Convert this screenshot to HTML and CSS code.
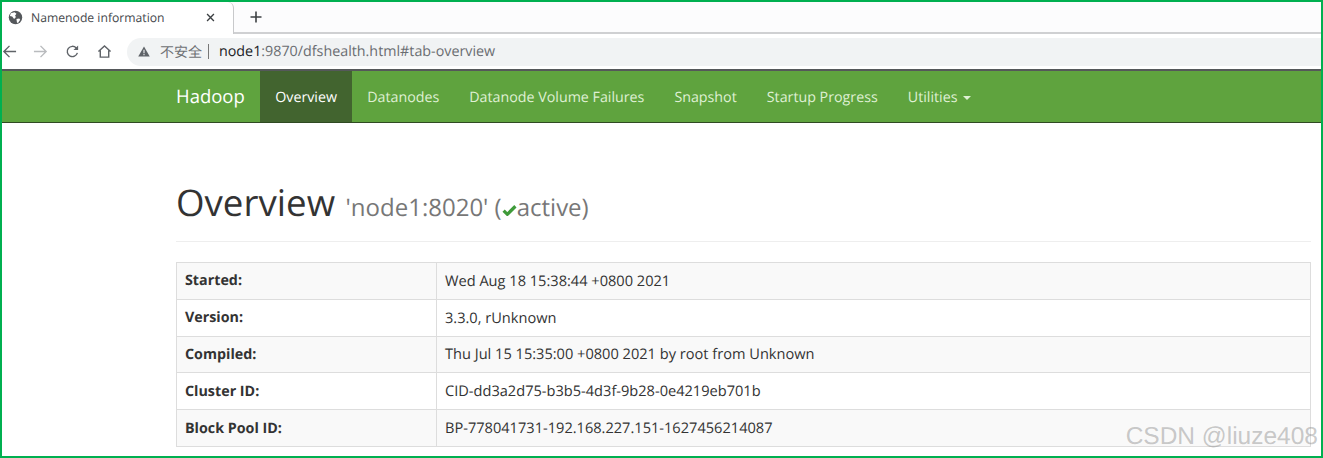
FILE: index.html
```html
<!DOCTYPE html>
<html lang="en">
<head>
<meta charset="utf-8">
<title>Namenode information</title>
<link rel="stylesheet" href="styles.css">
</head>
<body>
<div class="frame">
  <div class="tabstrip">
    <div class="tab">
      <svg class="favicon" viewBox="0 0 16 16"><circle cx="8" cy="8" r="7.2" fill="#55585c"/><path d="M3 3.5 7 2.5 9 4 7.5 6 8.5 7.5 6.5 9.5 4.5 7 2 6.5ZM9 9.5 12 9 13 10.5 10.5 14 9.5 13Z" fill="#fff"/></svg>
      <span class="tab-title">Namenode information</span>
      <svg class="tab-close" viewBox="0 0 10 10"><path d="M1.2 1.2 8.8 8.8M8.8 1.2 1.2 8.8" stroke="#3c4043" stroke-width="1.5" fill="none"/></svg>
    </div>
    <svg class="newtab" viewBox="0 0 12 12"><path d="M6 .5V11.500M.5 6H11.500" stroke="#3c4043" stroke-width="1.6" fill="none"/></svg>
  </div>
  <div class="toolbar">
    <svg class="tool tool-back" viewBox="0 0 16 16"><path d="M15 8H2M8 2 2 8l6 6" stroke="#5f6368" stroke-width="1.500" fill="none"/></svg>
    <svg class="tool tool-forward" viewBox="0 0 16 16"><path d="M1 8H14M8 2l6 6-6 6" stroke="#b9bbbe" stroke-width="1.500" fill="none"/></svg>
    <svg class="tool tool-reload" viewBox="0 0 16 16"><path d="M13.200 9.500A5.500 5.500 0 1 1 12 4.300" stroke="#5f6368" stroke-width="1.500" fill="none"/><path d="M14 1.500V6.500H9Z" fill="#5f6368"/></svg>
    <svg class="tool tool-home" viewBox="0 0 16 16"><path d="M1.500 8 8 2l6.500 6M3.500 7v7h9V7" stroke="#5f6368" stroke-width="1.500" fill="none"/></svg>
    <div class="omnibox">
      <svg class="warn" viewBox="0 0 14 13"><path d="M7 .5 13.800 12.500H.2Z" fill="#5f6368"/><path d="M7 4.500V8.500M7 9.500V11" stroke="#f1f3f4" stroke-width="1.300"/></svg>
      <span class="insecure">不安全</span>
      <span class="sep"></span>
      <span class="url"><span class="host">node1</span>:9870/dfshealth.html#tab-overview</span>
    </div>
  </div>
  <nav class="navbar">
    <span class="brand">Hadoop</span>
    <a class="nav-item active">Overview</a>
    <a class="nav-item">Datanodes</a>
    <a class="nav-item">Datanode Volume Failures</a>
    <a class="nav-item">Snapshot</a>
    <a class="nav-item">Startup Progress</a>
    <a class="nav-item">Utilities <i class="caret"></i></a>
  </nav>
  <main class="content">
    <div class="page-header">
      <h1>Overview <small>'node1:8020' (<svg class="check" viewBox="0 0 14 11"><path d="M1.500 6 5 9.500 12.500 2" stroke="#3f9b3a" stroke-width="3" fill="none"/></svg>active)</small></h1>
    </div>
    <table class="info">
      <tr><th>Started:</th><td>Wed Aug 18 15:38:44 +0800 2021</td></tr>
      <tr><th>Version:</th><td>3.3.0, rUnknown</td></tr>
      <tr><th>Compiled:</th><td>Thu Jul 15 15:35:00 +0800 2021 by root from Unknown</td></tr>
      <tr><th>Cluster ID:</th><td>CID-dd3a2d75-b3b5-4d3f-9b28-0e4219eb701b</td></tr>
      <tr><th>Block Pool ID:</th><td>BP-778041731-192.168.227.151-1627456214087</td></tr>
    </table>
  </main>
  <div class="watermark">CSDN @liuze408</div>
</div>
</body>
</html>
```
FILE: styles.css
```css
* { box-sizing: border-box; }
html, body { margin: 0; height: 100%; background: #fff; }
body { font-family: "Open Sans", "Noto Sans CJK SC", sans-serif; overflow: hidden; text-rendering: geometricPrecision; }
.frame { position: relative; width: 1323px; height: 458px; border: 2px solid #00b050; overflow: hidden; background: #fff; }

.tabstrip { height: 32px; display: flex; align-items: center; background: #fcfcfd; border-bottom: 2px solid #cfd0d2; }
.tab { width: 232px; height: 32px; margin-bottom: -2px; background: #fff; display: flex; align-items: center; padding: 0 0 2px 6px; border-right: 1px solid #c8c9cb; border-radius: 0 6px 0 0; }
.favicon { width: 15px; height: 15px; }
.tab-title { margin-left: 8px; font-size: 12.200px; color: #45484c; width: 175px; white-space: nowrap; }
.tab-close { width: 9px; height: 9px; }
.newtab { width: 12px; height: 12px; margin-left: 16px; }

.toolbar { height: 37px; display: flex; align-items: center; background: #fff; border-bottom: 2px solid #55585a; }
.tool { width: 15px; height: 15px; flex: none; }
.tool-forward { margin-left: 16px; }
.tool-reload { margin-left: 17px; }
.tool-home { margin-left: 17px; }
.omnibox { margin-left: 15px; flex: 1; height: 28px; background: #f1f3f4; border-radius: 14px 0 0 14px; display: flex; align-items: center; padding-left: 11px; }
.warn { width: 12px; height: 11px; }
.insecure { margin-left: 10px; font-size: 14px; color: #6f7175; }
.sep { width: 1px; height: 15px; background: #777; margin: 0 10px 0 6px; }
.url { font-size: 14.300px; color: #6a6d71; white-space: nowrap; }
.host { color: #202124; }

.navbar { height: 52px; background: #5fa33e; border-bottom: 1px solid #2f4a22; display: flex; padding-left: 174px; font-size: 14.250px; }
.brand { color: #fff; font-size: 18.500px; width: 84px; line-height: 52px; }
.nav-item { color: #dff0d4; padding: 0 15px; line-height: 53px; height: 51px; white-space: nowrap; }
.nav-item.active { background: #42642f; color: #fff; padding: 0 15.200px; }
.caret { display: inline-block; width: 0; height: 0; border-top: 4px solid #dff0d4; border-left: 4px solid transparent; border-right: 4px solid transparent; vertical-align: middle; margin-left: 2px; }

.content { padding: 53px 10px 0 174px; color: #333; }
.page-header { border-bottom: 1px solid #eee; height: 66px; }
h1 { margin: 0; font-size: 36.700px; font-weight: 400; line-height: 52px; color: #333; white-space: nowrap; }
small { font-size: 24px; color: #777; margin-left: 1px; }
.check { width: 15px; height: 12px; }
.info { width: 100%; margin-top: 20px; border-collapse: collapse; font-size: 14.600px; table-layout: fixed; border: 1px solid #ddd; }
.info tr { height: 36.800px; }
.info tr:nth-child(odd) { background: #f9f9f9; }
.info th { width: 260px; text-align: left; font-weight: 700; font-size: 14.300px; color: #333; padding: 0 8px; border: 1px solid #ddd; }
.info td { padding: 0 8px; border: 1px solid #ddd; white-space: nowrap; }

.watermark { position: absolute; right: 3px; bottom: 4px; font-family: "Liberation Sans", sans-serif; font-size: 24.500px; line-height: 30px; color: rgba(120,120,120,.4); white-space: nowrap; }
```
